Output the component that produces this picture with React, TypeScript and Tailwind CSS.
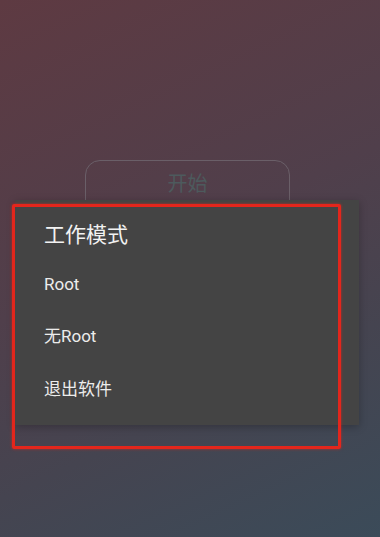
import React from 'react';

const items = ['Root', '无Root', '退出软件'];

const App: React.FC = () => {
  return (
    <div className="relative h-[537px] w-full overflow-hidden bg-[linear-gradient(155deg,#5e3a42_0%,#503f4b_45%,#454450_70%,#3b4b59_100%)] font-['Roboto','Noto_Sans_CJK_SC',sans-serif]">
      {/* page behind the dialog */}
      <div className="flex flex-col items-start pl-[85px] pt-[160px]">
        <button className="flex h-[56px] w-[205px] items-start justify-center rounded-[15px] border-[1.5px] border-[#6a5f68] pt-[8px] text-[20px] text-[#4d5a5d]">
          开始
        </button>
      </div>

      {/* dialog */}
      <div className="absolute left-[15px] top-[200px] h-[225px] w-[344px] bg-[#444444] shadow-[0_2px_8px_rgba(0,0,0,0.25)]">
        <div className="pl-[29px] pt-[21px] text-[21px] leading-[28px] text-[#f2f2f2]">工作模式</div>
        <div className="mt-[9px] flex flex-col">
          {items.map((item) => (
            <div key={item} className="flex h-[52.5px] items-center pl-[29px] text-[17px] text-[#ececec]">
              {item}
            </div>
          ))}
        </div>
      </div>

      {/* annotation box */}
      <div className="absolute left-[12px] top-[204px] h-[245px] w-[329px] rounded-[2px] border-[3px] border-[#e3261c] shadow-[0_0_3px_rgba(230,40,30,0.7)]" />
    </div>
  );
};

export default App;
